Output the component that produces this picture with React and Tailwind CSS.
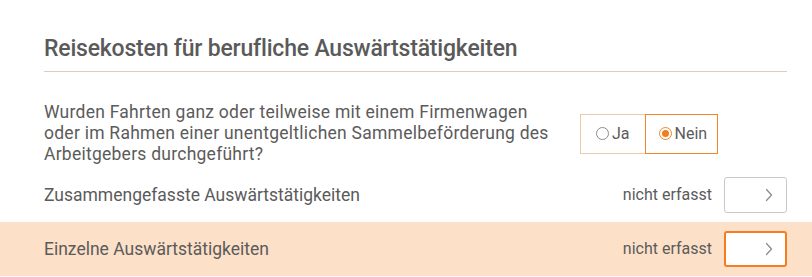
import React from 'react';

const Chevron = () => (
  <svg width="8" height="14" viewBox="0 0 8 14" fill="none" stroke="#8a8a8a" strokeWidth="1.2" strokeLinecap="round" strokeLinejoin="round">
    <polyline points="1.5 1.5 6.5 7 1.5 12.5" />
  </svg>
);

function Radio({ label, checked }) {
  return (
    <label
      className={
        checked
          ? 'flex items-center gap-[3px] h-[40px] pl-[13px] pr-[10px] border border-[#f0852a] bg-white'
          : 'flex items-center gap-[3px] h-[40px] px-[15px] border border-r-0 border-[#ebc9aa] bg-white'
      }
    >
      {checked ? (
        <span className="flex items-center justify-center w-[13px] h-[13px] rounded-full border border-[#f0852a]">
          <span className="w-[7px] h-[7px] rounded-full bg-[#f07d1e]" />
        </span>
      ) : (
        <span className="w-[13px] h-[13px] rounded-full border border-[#8c8c8c]" />
      )}
      <span className="text-[16px] leading-none text-[#5b5b5b]">{label}</span>
    </label>
  );
}

function NavRow({ label, active }) {
  return (
    <div className={active ? 'flex items-center py-[9px] pl-[44px] pr-[25px] bg-[#fde0c8]' : 'flex items-center py-[9px] pl-[44px] pr-[25px]'}>
      <span className="flex-1 text-[17.5px] leading-6 text-[#5b5b5b]">{label}</span>
      <span className="text-[16px] leading-6 text-[#5b5b5b] mr-[12px]">nicht erfasst</span>
      <button
        className={
          active
            ? 'flex items-center justify-end w-[63px] h-[36px] pr-[12px] rounded-[3px] border-2 border-[#f57c1f] bg-white'
            : 'flex items-center justify-end w-[63px] h-[36px] pr-[13px] rounded-[3px] border border-[#c9c9c9] bg-white'
        }
      >
        <Chevron />
      </button>
    </div>
  );
}

export default function App() {
  return (
    <div className="w-[812px] h-[277px] overflow-hidden bg-white font-['Roboto',sans-serif] text-[#5b5b5b]">
      {/* Section title */}
      <div className="pt-[35px] pl-[44px] pr-[25px]">
        <h2 className="text-[23px] leading-[28px] font-medium tracking-[-0.2px] text-[#5a5a5a] pb-[8px] border-b border-[#e2ccb8]">
          Reisekosten für berufliche Auswärtstätigkeiten
        </h2>
      </div>

      {/* Company car question */}
      <div className="grid grid-cols-[536px_1fr] items-center mt-[30px] pl-[44px] pr-[25px]">
        <p className="max-w-[505px] text-[17.5px] leading-[21px] tracking-[0.25px] text-[#5b5b5b]">
          Wurden Fahrten ganz oder teilweise mit einem Firmenwagen oder im Rahmen einer unentgeltlichen Sammelbeförderung des Arbeitgebers durchgeführt?
        </p>
        <div className="flex">
          <Radio label="Ja" />
          <Radio label="Nein" checked />
        </div>
      </div>

      <div className="mt-[3px]">
        <NavRow label="Zusammengefasste Auswärtstätigkeiten" />
        <NavRow label="Einzelne Auswärtstätigkeiten" active />
      </div>
    </div>
  );
}
